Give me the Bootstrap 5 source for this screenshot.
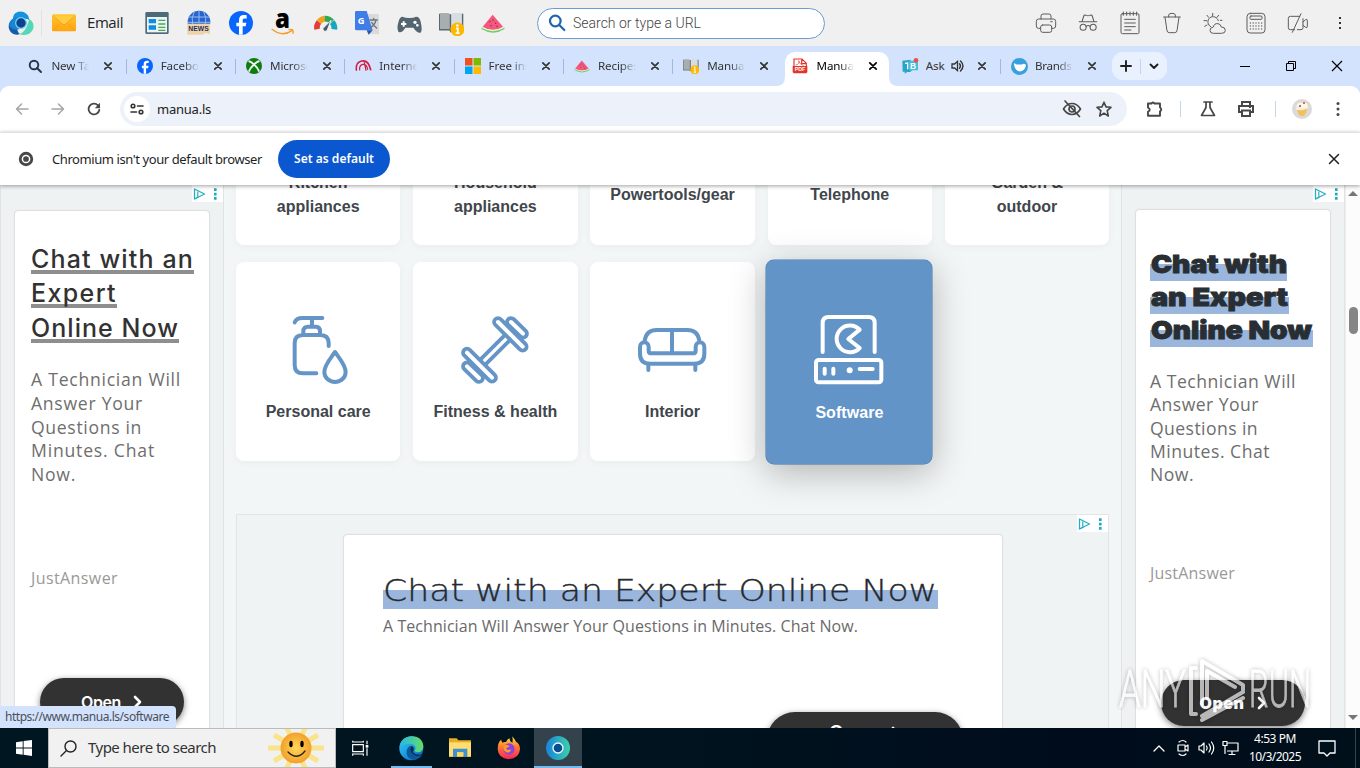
<!DOCTYPE html>
<html lang="en">
<head>
<meta charset="utf-8">
<meta name="viewport" content="width=device-width, initial-scale=1">
<title>manua.ls</title>
<link href="https://cdn.jsdelivr.net/npm/bootstrap@5.3.0/dist/css/bootstrap.min.css" rel="stylesheet">
<style>
body{font-family:"Noto Sans","Open Sans",sans-serif;font-size:12px;line-height:1.3;color:#1f1f1f;background:#f3f6f6}
svg{display:block;flex:none;overflow:visible}
[data-w]{display:inline-block;white-space:nowrap}
.quickbar,.tabstrip,.addrrow,.infobar,.taskbar{flex:none}
.ln{fill:none;stroke:currentColor;stroke-linecap:round;stroke-linejoin:round}
.quickbar{height:46px;background:#f0f0f0}
.quickbar .cell{width:42px;display:flex;justify-content:center;align-items:center;flex:none}
.quickbar .tool{color:#5c5c5c}
.urlbox{width:288px;height:31px;border:1px solid #6c9bd2;border-radius:16px;background:#fff;font:300 14px Roboto,sans-serif;color:#444;margin-left:23px}
.tabstrip{height:40px;background:#d3e3fd;padding-left:17.4px}
.tabcell{width:109.3px;height:40px;flex:none;padding-left:10px;position:relative;font-size:11.6px;color:#333}
.tabcell:not(.nosep)::after{content:"";position:absolute;right:0;top:13px;width:1px;height:15px;background:#9db9e4}
.tabcell .lbl{width:38px;margin-left:8px;overflow:hidden;white-space:nowrap;letter-spacing:-.1px;-webkit-mask:linear-gradient(90deg,#000 60%,transparent)}
.tabcell .shut{margin-left:11px}
.tabcell.front::before{content:"";position:absolute;left:3px;right:3px;top:6px;bottom:0;background:#fff;border-radius:10px 10px 0 0}
.tabcell.front>*{position:relative}
.foot{position:absolute!important;bottom:0;width:9px;height:9px}
.newtab{width:55px;height:28px;border-radius:11px;background:#e9f1fe;margin-left:2px}
.wctl{width:46px;display:flex;justify-content:center}
.addrrow{height:46px;background:#fff;border-radius:9px 9px 0 0;color:#474747}
.omni{width:1007px;height:34px;border-radius:17px;background:#ecf1fa;margin-left:8px;padding-left:4px}
.chip{width:26px;height:26px;border-radius:50%;background:#fff}
.c36{width:36px;display:flex;justify-content:center;flex:none}
.vbar{width:1px;height:16px;background:#c5d5ee}
.infobar{height:53px;background:#fff;border-top:1px solid #dfe1e5;box-shadow:0 1px 4px rgba(0,0,0,.38);z-index:5;position:relative;font-size:13px}
.infobar .btn{width:112px;height:38px;border-radius:19px;background:#0b57d0;color:#fff;font-size:12px;font-weight:600;padding:0}
.sidead{width:224px;background:#eff2f2;border:solid #dfe3e3;border-width:0 1px;flex:none;position:relative}
.adtag{position:absolute;right:0;top:0;height:17px;width:31px;background:#fff}
.adcard{background:#fff;box-shadow:0 0 2px rgba(0,0,0,.28);border-radius:3px 3px 0 0}
.sidead .adcard{width:194px;height:560px;padding-left:16px;margin-left:14px}
.h-left{font:450 25px/34.4px Inter,sans-serif;color:#323232}
.h-left span{background:linear-gradient(#8e8e8e,#8e8e8e) 0 28px/100% 4px no-repeat;height:34.4px}
.h-right{font:900 25px/33px Inter,"Open Sans",sans-serif}
.h-right text{fill:#282e33;stroke:#282e33;stroke-width:.9}
.h-right svg{background:linear-gradient(#9ab6dc,#9ab6dc) 0 16px/100% 17px no-repeat}
.h-mid{font:200 29.5px/38px "DejaVu Sans Light","DejaVu Sans",sans-serif}
.h-mid text{fill:#252a30;stroke:#252a30;stroke-width:.35}
.h-mid svg{background:linear-gradient(#9ab6dc,#9ab6dc) 0 19px/100% 19px no-repeat}
.adcopy{font:400 17.6px/23.7px "Open Sans",sans-serif;color:#6e6e6e}
.brand{font:400 16px/22px "Open Sans",sans-serif;color:#999}
.open{width:144px;height:48px;border-radius:24px;background:#323232;color:#fff;box-shadow:0 2px 6px rgba(0,0,0,.5);font:600 16px Inter,sans-serif;gap:12px}
.centre{width:897px;padding:0 12px;flex:none}
.tiles{display:grid;grid-template-columns:repeat(5,164.4px);column-gap:12.8px}
.tile{background:#fff;border-radius:8px;box-shadow:0 2px 8px rgba(0,0,0,.04);text-align:center;font:700 16px/24px "Liberation Sans",sans-serif;color:#3f464c}
.tile.cut{height:60px;border-radius:0 0 8px 8px;display:flex;align-items:flex-end;justify-content:center;overflow:hidden;padding-bottom:26px}
.tile.cut.one{padding-bottom:38px}
.tile.full{height:199px;padding-top:53px;color:#3f464c}
.tile.full svg{margin:0 auto 15px;color:#6595c7}
.tile.hot{background:#6394c7;color:#fff;height:204px;width:166px;margin:-2px 0 0 -1.2px;padding-top:55px;box-shadow:0 8px 36px rgba(0,0,0,.28),0 0 0 .5px #4f83b8;position:relative}
.tile.hot svg{color:#fff;margin-bottom:16px}
.midad{height:240px;margin-top:50px;background:#f0f3f3;border:1px solid #e2e5e5;position:relative;width:873px}
.midad .adcard{width:658px;margin:0 0 0 107px;height:220px;padding:36px 0 0 39px}
.open.big{width:196px;height:56px;border-radius:28px;font-size:19px}
.scroller{width:15px;background:#fcfcfc;border-left:1px solid #eee;flex:none}
.status{position:absolute;left:0;bottom:0;width:176px;height:22px;background:#d3e3fd;border-radius:0 4px 0 0;padding:3px 0 0 5px;color:#4a5058;z-index:4}
.watermark{position:absolute;left:1112px;bottom:2px;z-index:4}
.taskbar{height:40px;background:linear-gradient(90deg,#001620,#00141f 45%,#000c1c 80%,#00101a);color:#fff}
.finder{width:288px;height:40px;background:#f1f1f1;border:1px solid #bbb;color:#333;font-size:15px}
.app{width:49px;height:40px;display:flex;align-items:center;justify-content:center;flex:none}
.app.run{box-shadow:inset 0 -2px #76b9ed}
</style>
</head>
<body class="vh-100 overflow-hidden d-flex flex-column">
<svg width="0" height="0" class="position-absolute">
<defs>
<linearGradient id="env" x2="0" y2="1"><stop stop-color="#ffc52e"/><stop offset="1" stop-color="#ffa412"/></linearGradient>
<linearGradient id="edge" x2="1" y2="1"><stop offset=".1" stop-color="#31c6ee"/><stop offset=".55" stop-color="#1695df"/><stop offset="1" stop-color="#0c4f9e"/></linearGradient>
<linearGradient id="edge2" x2="1"><stop stop-color="#25b8e8"/><stop offset="1" stop-color="#65dd65"/></linearGradient>
<linearGradient id="fire" x2="0" y2="1"><stop stop-color="#ffe642"/><stop offset=".45" stop-color="#ff7a2e"/><stop offset="1" stop-color="#f7245c"/></linearGradient>
<linearGradient id="ring" x2="1"><stop stop-color="#1684da"/><stop offset="1" stop-color="#3dd0ac"/></linearGradient>
<radialGradient id="sun"><stop stop-color="#ffd65c"/><stop offset="1" stop-color="#f2a129"/></radialGradient>
<symbol id="x" viewBox="0 0 16 16"><path class="ln" stroke-width="1.7" d="M4.800 4.800l6.400 6.400M11.200 4.800l-6.400 6.400"/></symbol>
<symbol id="melon" viewBox="0 0 72 72"><path d="M35 11L66 47Q36 68 5 47z" fill="#f7577c"/><path d="M3 49Q36 67 69 49L71 54Q37 76 1 54z" fill="#75ca70"/><path d="M4 48Q36 65 68 48L69 51Q36 70 3 51z" fill="#e5f7cf"/><path d="M27 30v4M36 25v4M44 35v4M30 42v4M48 44v4" stroke="#59354b" stroke-width="3"/></symbol>
<symbol id="book" viewBox="0 0 72 72"><path d="M3 6h18q9 0 12 4V52H3z" fill="#a8adb0"/><path d="M33 10q5-4 12-4h22v46H33z" fill="#d7dde0"/><path d="M1 8v46h30l3 5 3-5h31V8M33 9v45" fill="none" stroke="#596870" stroke-width="4"/><circle cx="53" cy="53" r="20" fill="#ffb800"/><path d="M49 50h5v14m-6 0h11" stroke="#fff" stroke-width="5" fill="none"/><circle cx="53" cy="42" r="3.6" fill="#fff"/></symbol>
<symbol id="fb" viewBox="0 0 72 72"><circle cx="36" cy="36" r="36" fill="#0866ff"/><path d="M30 71V46h-8V35h8v-7c0-13 7-18 23-15v10c-9-1-12 0-12 6v6h11l-2 11h-9v25z" fill="#fff"/></symbol>
<symbol id="adc" viewBox="0 0 31 17"><path d="M2.500 4v10l10-5z" fill="#fff" stroke="#26afc3" stroke-width="1.300" stroke-linejoin="round"/><path d="M5.800 6.500v6M2.500 14l4-2" stroke="#26afc3" stroke-width="1.200"/><path d="M22 3.200h2.600v2.700H22zm0 4.500h2.600v2.700H22zm0 4.300h2.600v2.700H22z" fill="#1cabc1"/></symbol>
<symbol id="chev" viewBox="0 0 10 14"><path class="ln" stroke-width="2.6" d="M2 2l5 5-5 5"/></symbol>
</defs></svg>

<!-- quick launch bar -->
<div class="quickbar d-flex align-items-center">
<div class="cell border-end"><svg width="26" height="26" viewBox="0 0 78 78"><path d="M15 30C12-5 62-3 64 30Q50 22 30 32z" fill="#1593df"/><path d="M14 27C-12 46 9 83 36 72Q27 68 26 42z" fill="#165ba8"/><path d="M64 27C92 46 70 86 34 72Q48 70 58 45z" fill="#54d7b6"/><path d="M14 27Q20 20 29 23 18 43 35 57 18 64 4 49 3 34 14 27z" fill="#1985d2"/><circle cx="39" cy="39" r="16" fill="#0c438e" stroke="#6cd1f3" stroke-width="4"/></svg></div>
<div style="margin-left:10px"><svg width="24" height="20" viewBox="0 0 72 60"><rect y="4" width="72" height="51" rx="5" fill="url(#env)"/><path d="M3 8l28 25q5 5 10 0L69 8" fill="#ffcd3b" stroke="#e79a17" stroke-width="2"/><path d="M2 53l24-23M70 53L46 30" stroke="#ed9c16" stroke-width="2"/></svg></div>
<div style="margin:-3px 0 0 11px;font:400 15px 'Open Sans'" class="text-dark"><span data-w="36">Email</span></div>
<div style="width:13px"></div>
<div class="cell"><svg width="24" height="24" viewBox="0 0 72 72"><rect x="1" y="3" width="70" height="66" rx="4" fill="#506979"/><path d="M6 18h60v46H6z" fill="#e9f5f4"/><path d="M11 24h22v13H11zm0 19h22v13H11z" fill="#128cde"/><path d="M40 28h21M40 39h21M40 49h21M40 58h21" stroke="#4ca64e" stroke-width="4"/></svg></div>
<div class="cell"><svg width="26" height="26" viewBox="0 0 78 78"><circle cx="39" cy="36" r="34" fill="#2864cf"/><path class="ln" color="#94baf1" stroke-width="3" d="M39 3v36M8 21h62M6 37h66M25 5Q14 24 20 42M53 5Q64 24 58 42"/><path d="M4 41h68v31l-14-3-8 5H4z" fill="#f0d2a9"/><text x="7" y="64" font-family="Liberation Sans" font-weight="700" font-size="19" textLength="61" lengthAdjust="spacingAndGlyphs" fill="#25345a">NEWS</text></svg></div>
<div class="cell"><svg width="24" height="24"><use href="#fb"/></svg></div>
<div class="cell"><svg width="26" height="26" viewBox="0 0 78 78"><text x="15" y="54" font-family="Open Sans" font-weight="800" font-size="79" textLength="45" lengthAdjust="spacingAndGlyphs" fill="#000">a</text><path d="M6 58Q37 82 66 62m-9-3q16-3 12 11" class="ln" color="#f79c24" stroke-width="4"/></svg></div>
<div class="cell"><svg width="25" height="25" viewBox="0 0 75 75"><g fill="none" stroke-width="17"><path d="M12 55A26 26 0 0 1 18 33" stroke="#e23c3a"/><path d="M18 33A26 26 0 0 1 35 23" stroke="#f3a11f"/><path d="M35 23A26 26 0 0 1 56 32" stroke="#31a852"/><path d="M57 33A26 26 0 0 1 64 55" stroke="#16a6bd"/></g><path d="M54 28L43 57a7 7 0 0 1-13-5z" fill="#465b69" stroke="#f0f0f0" stroke-width="3"/></svg></div>
<div class="cell"><svg width="26" height="26" viewBox="0 0 78 78"><path d="M30 12h42q3 0 3 4v57H42z" fill="#dadada"/><path d="M5 3h33l18 58H8q-5 0-5-5V6z" fill="#3f7de8"/><path d="M38 61h18L44 74z" fill="#2856b7"/><text x="11" y="41" fill="#fff" font-family="Open Sans" font-weight="700" font-size="28">G</text><path class="ln" color="#68777e" stroke-width="4" d="M48 30h22M59 25v5m7 0Q62 46 50 52m3-15q7 11 15 17"/></svg></div>
<div class="cell"><svg width="25" height="25" viewBox="0 0 75 75"><path d="M17 17q6 4 20 4t20-4q10-1 14 15 6 27 0 33-10 3-22-15H25Q14 68 4 62-2 51 6 28q3-11 11-11z" fill="#526570"/><path d="M20 31v16M12 39h16" stroke="#fff" stroke-width="6"/><circle cx="54" cy="34" r="5" fill="#fff"/><circle cx="61" cy="43" r="4" fill="#fff"/></svg></div>
<div class="cell"><svg width="25" height="25"><use href="#book"/></svg></div>
<div class="cell"><svg width="24" height="24"><use href="#melon"/></svg></div>
<div class="urlbox d-flex align-items-center"><svg width="18" height="18" viewBox="0 0 18 18" style="margin:0 7px 0 10px"><g class="ln" color="#1f66ae" stroke-width="2.2"><circle cx="7.3" cy="7" r="5.3"/><path d="M11.3 11l5 5"/></g></svg><span data-w="128">Search or type a URL</span></div>
<div class="d-flex ms-auto tool">
<div class="cell"><svg width="22" height="22" viewBox="0 0 66 66"><g class="ln" stroke-width="3"><path d="M18 21V12q0-6 6-6h18q6 0 6 6v9M16 49H10Q4 49 4 42V28q0-7 7-7h44q7 0 7 7v14q0 7-7 7h-5"/><rect x="17" y="39" width="33" height="22" rx="6"/><path d="M47 29h5"/></g></svg></div>
<div class="cell"><svg width="20" height="20" viewBox="0 0 66 66"><g class="ln" stroke-width="3.500"><path d="M13 29l6-19q1-4 6-3 8 4 16 0 5-1 6 3l6 19zM4 29h58"/><circle cx="17" cy="47" r="10"/><circle cx="50" cy="47" r="10"/><path d="M27 44q6-5 13 0"/></g></svg></div>
<div class="cell"><svg width="22" height="24" viewBox="0 0 66 72"><g class="ln" stroke-width="3"><rect x="6" y="8" width="54" height="60" rx="4"/><path d="M13 3v10M23 3v10M33 3v10M43 3v10M53 3v10M17 25h32M17 36h32M17 47h32M17 57h19"/></g></svg></div>
<div class="cell"><svg width="22" height="22" viewBox="0 0 66 66"><g class="ln" stroke-width="3"><path d="M8 15h50M23 15V9q0-5 10-5t10 5v6M12 16l6 40q1 6 7 6h16q6 0 7-6l6-40"/></g></svg></div>
<div class="cell"><svg width="23" height="23" viewBox="0 0 69 69"><g class="ln" stroke-width="3"><path d="M23 44A16 16 0 1 1 46 26M29 4v8M12 10l5 6M3 26h8M5 43l7-4M47 10l-5 6M57 25h-5"/><path d="M30 64q-9 0-9-9t10-10q3-12 14-10 8 1 10 10 12 0 12 10 0 9-10 9z" fill="#f0f0f0"/></g></svg></div>
<div class="cell"><svg width="22" height="22" viewBox="0 0 66 66"><g class="ln" stroke-width="3"><rect x="6" y="4" width="54" height="59" rx="10"/><rect x="15" y="12" width="36" height="10" rx="3"/><path stroke-width="4" stroke-dasharray="0 8.5" d="M16 33h36M16 42h36M16 51h36"/></g></svg></div>
<div class="cell"><svg width="22" height="22" viewBox="0 0 66 66"><g class="ln" stroke-width="3"><path d="M23 53H10q-6 0-6-6V19q0-6 6-6h28M31 53h11q6 0 6-6V20M48 30l8-7q5-3 5 3v17q0 6-5 3l-8-6M42 5L16 61"/></g></svg></div>
<div class="cell" style="width:41px"><svg width="4" height="16" viewBox="0 0 4 16"><path d="M1 2h2v2H1zm0 5h2v2H1zm0 5h2v2H1z" fill="#333"/></svg></div>
</div>
</div>

<!-- tab strip -->
<div class="tabstrip d-flex align-items-center">
<div class="tabcell d-flex align-items-center"><svg width="16" height="16" viewBox="0 0 16 16"><g class="ln" color="#283443" stroke-width="1.9"><circle cx="7" cy="7" r="4.3"/><path d="M10 10l4 4"/></g></svg><div class="lbl">New Tab</div><svg class="shut" width="16" height="16"><use href="#x"/></svg></div>
<div class="tabcell d-flex align-items-center"><svg width="16" height="16"><use href="#fb"/></svg><div class="lbl">Facebook</div><svg class="shut" width="16" height="16"><use href="#x"/></svg></div>
<div class="tabcell d-flex align-items-center"><svg width="16" height="16" viewBox="0 0 16 16"><circle cx="8" cy="8" r="8" fill="#107c10"/><path d="M2.500 3Q5 3.500 8 6.500 11 3.500 13.500 3M8 6.500Q4 10 2.800 13.600M8 6.500Q12 10 13.200 13.600" fill="none" stroke="#edf6f2" stroke-width="1.900"/></svg><div class="lbl">Microsoft</div><svg class="shut" width="16" height="16"><use href="#x"/></svg></div>
<div class="tabcell d-flex align-items-center"><svg width="17" height="16" viewBox="0 0 51 48"><g class="ln" color="#d31a40" stroke-width="5"><path d="M4 36Q1 13 20 9 40 5 47 35"/><path stroke-width="3.500" d="M14 36Q12 22 23 19q12-1 15 15M28 14l5 23"/></g></svg><div class="lbl" style="margin-left:7px">Internet</div><svg class="shut" width="16" height="16"><use href="#x"/></svg></div>
<div class="tabcell d-flex align-items-center"><svg width="16" height="16" viewBox="0 0 16 16"><path d="M0 0h7.500v7.500H0z" fill="#f25022"/><path d="M8.500 0H16v7.500H8.500z" fill="#7fba00"/><path d="M0 8.500h7.500V16H0z" fill="#00a4ef"/><path d="M8.500 8.500H16V16H8.500z" fill="#ffb900"/></svg><div class="lbl">Free ins</div><svg class="shut" width="16" height="16"><use href="#x"/></svg></div>
<div class="tabcell d-flex align-items-center"><svg width="16" height="16"><use href="#melon"/></svg><div class="lbl">Recipes</div><svg class="shut" width="16" height="16"><use href="#x"/></svg></div>
<div class="tabcell nosep d-flex align-items-center"><svg width="16" height="16"><use href="#book"/></svg><div class="lbl">Manuals</div><svg class="shut" width="16" height="16"><use href="#x"/></svg></div>
<div class="tabcell nosep front d-flex align-items-center text-black"><svg class="foot" style="left:-6px" viewBox="0 0 9 9"><path d="M9 0v9H0Q9 9 9 0z" fill="#fff"/></svg><svg class="foot" style="right:-6px" viewBox="0 0 9 9"><path d="M0 0v9h9Q0 9 0 0z" fill="#fff"/></svg><svg width="16" height="16" viewBox="0 0 48 48"><path d="M6 24V3h24l13 13v8M29 3v14h14" fill="#fff" stroke="#e5352b" stroke-width="3.500"/><path d="M11 21q13-3 9-13 1 10 15 15" fill="none" stroke="#e5352b" stroke-width="2"/><path d="M2 24h44v18l-3 4H5l-3-4z" fill="#e5352b"/><text x="8" y="40" font-family="Liberation Sans" font-weight="700" font-size="16" fill="#fff">PDF</text></svg><div class="lbl">Manuals</div><svg class="shut" width="16" height="16"><use href="#x"/></svg></div>
<div class="tabcell d-flex align-items-center"><svg width="17" height="16" viewBox="0 0 51 48"><path d="M1 8l25-3v37H16l-8 5v-6H2z" fill="#28a5c7"/><path d="M21 8h27v29H32l-7 5v-6h-4z" fill="#48bdd9"/><text x="24" y="32" fill="#fff" font-family="Liberation Sans" font-weight="700" font-size="25">B</text><path d="M9 16l8-1v19" fill="none" stroke="#fff" stroke-width="4"/><circle cx="42" cy="7" r="7" fill="#ee4f52"/></svg><div class="lbl" style="width:19px;margin-left:7px;-webkit-mask:none">Ask</div><svg width="14" height="14" viewBox="0 0 14 14" style="margin-left:6px"><path d="M1 5h2.500l3-2.500v9l-3-2.500H1z" fill="none" stroke="#333" stroke-width="1.300"/><path d="M8.500 4.800q2 2.200 0 4.400M9.500 2q5 5 0 10" class="ln" stroke-width="1.400"/></svg><svg style="margin-left:9px" width="16" height="16"><use href="#x"/></svg></div>
<div class="tabcell nosep d-flex align-items-center"><svg width="17" height="17" viewBox="0 0 17 17"><circle cx="8.500" cy="8.500" r="8.500" fill="#38a0dd"/><path d="M3 5l2.500 1.500h5.500Q13 5 15 7q-1 6-6.500 6.500Q3 12 3 5z" fill="#fff"/></svg><div class="lbl" style="margin-left:7px;letter-spacing:-.3px">Brands</div><svg class="shut" width="16" height="16"><use href="#x"/></svg></div>
<div class="newtab d-flex align-items-center"><svg width="55" height="28" viewBox="0 0 55 28"><g class="ln" stroke-width="1.900" stroke-linecap="butt"><path d="M9 14h10M14 9v10"/><path d="M38.500 12.500L42 16l3.500-3.500"/></g><path d="M28.500 7v15" stroke="#c2d4f4"/></svg></div>
<div class="d-flex ms-auto text-black"><div class="wctl"><svg width="12" height="12"><path d="M1 6.500h10" stroke="#000"/></svg></div><div class="wctl"><svg width="12" height="12"><path d="M1.500 3.500h7v7h-7zM3.500 3.500v-2h7v7h-2" fill="none" stroke="#000"/></svg></div><div class="wctl"><svg width="12" height="12"><path d="M1 1l10 10M11 1L1 11" stroke="#000" stroke-width="1.200"/></svg></div></div>
</div>

<!-- address row -->
<div class="flex-shrink-0" style="background:#d3e3fd"><div class="addrrow d-flex align-items-center">
<div style="width:4px"></div>
<div class="c36"><svg width="14" height="14" viewBox="0 0 14 14"><path class="ln" color="#a5a5a5" stroke-width="1.500" d="M13 7H1.500M6.500 2l-5 5 5 5"/></svg></div>
<div class="c36"><svg width="14" height="14" viewBox="0 0 14 14"><path class="ln" color="#a5a5a5" stroke-width="1.500" d="M1 7h11.500M7.500 2l5 5-5 5"/></svg></div>
<div class="c36"><svg width="14" height="14" viewBox="0 0 14 14"><path class="ln" stroke-width="1.800" d="M12.300 8A5.400 5.400 0 1 1 11 3.400L12.300 5"/><path d="M13 .8v5.400H7.800z" fill="currentColor"/></svg></div>
<div class="omni d-flex align-items-center"><div class="chip d-flex align-items-center justify-content-center"><svg width="14" height="14" viewBox="0 0 14 14"><g class="ln" color="#333" stroke-width="1.600"><circle cx="3" cy="4" r="1.800"/><path d="M7.500 4H13M1 10h5.500"/><circle cx="11" cy="10" r="1.800"/></g></svg></div>
<div style="font-size:13px;margin-left:7px;color:#222"><span data-w="54">manua.ls</span></div>
<svg class="ms-auto" width="20" height="18" viewBox="0 0 20 18"><g class="ln" stroke-width="1.700"><path d="M1.500 9Q5 3.500 10 3.500T18.500 9Q15 14.500 10 14.500T1.500 9z"/><circle cx="10" cy="9" r="3"/><path d="M3 1l14.500 15.500"/></g></svg>
<svg style="margin:0 15px 0 14px" width="16" height="16" viewBox="0 0 16 16"><path class="ln" stroke-width="1.600" d="M8 1.200l2 4.700 5 .4-3.800 3.400L12.300 15 8 12.200 3.700 15l1.100-5.300L1 6.300l5-.4z"/></svg></div>
<svg style="margin-left:19px" width="17" height="17" viewBox="0 0 17 17"><path class="ln" stroke-width="1.900" d="M2 2.500h3.500q1-2 3 0H14v4q2.500 1.500 0 4v4.300H2v-4Q5.500 9 2 6.500z"/></svg>
<div class="vbar" style="margin:0 18px 0 17px"></div>
<svg width="18" height="18" viewBox="0 0 18 18"><path class="ln" stroke-width="1.700" d="M5 2h8M7 2v5.500L2.500 15.500h13L11 7.500V2"/></svg>
<svg style="margin-left:20px" width="18" height="18" viewBox="0 0 18 18"><g fill="none" stroke="#474747" stroke-width="2"><path d="M5 5V2h8v3M4 12H2V6h14v6h-2"/><path d="M5 10.500h8V16H5z"/></g><path d="M12 7.500h2" stroke="#474747"/></svg>
<div class="vbar" style="margin:0 16px 0 20px"></div>
<svg width="20" height="20" viewBox="0 0 20 20"><circle cx="10" cy="10" r="10" fill="#ddd9da"/><path d="M4 7q3-5 6-3 5-2 6 4-6 3-12-1z" fill="#fff8e9"/><path d="M5 9h10l-1 5-2 3H8l-2-3z" fill="#efc25b"/><path d="M4 9q6 3 12-1" stroke="#ffefdb" stroke-width="2" fill="none"/><circle cx="8" cy="7" r="1" fill="#80504a"/><circle cx="12" cy="4" r="1" fill="#d2422b"/></svg>
<svg style="margin-left:24px" width="4" height="16" viewBox="0 0 4 16" fill="#474747"><circle cx="2" cy="2.500" r="1.500"/><circle cx="2" cy="8" r="1.500"/><circle cx="2" cy="13.500" r="1.500"/></svg>
</div></div>

<!-- default browser prompt -->
<div class="infobar d-flex align-items-center"><svg style="margin:0 18px 0 18px" width="16" height="16" viewBox="0 0 16 16"><circle cx="8" cy="8" r="7.200" fill="#484848"/><circle cx="8" cy="8" r="3.600" fill="#484848" stroke="#fff" stroke-width="1.500"/></svg><span data-w="210">Chromium isn't your default browser</span>
<button class="btn" style="margin-left:16px"><span data-w="80">Set as default</span></button>
<svg class="ms-auto" style="margin-right:17px" width="18" height="18" viewBox="0 0 16 16"><path class="ln" stroke-width="1.300" d="M4 4l8 8M12 4l-8 8"/></svg></div>

<!-- page -->
<main class="flex-fill d-flex position-relative overflow-hidden" style="min-height:0">
<aside class="sidead"><svg class="adtag" viewBox="0 0 31 17"><use href="#adc"/></svg>
<div class="adcard" style="margin-top:26px;padding-top:31px">
<div class="h-left"><span data-w="163">Chat with an</span><br><span data-w="86">Expert</span><br><span data-w="148">Online Now</span></div>
<div class="adcopy" style="margin-top:23px"><span data-w="150">A Technician Will</span><br><span data-w="112">Answer Your</span><br><span data-w="111">Questions in</span><br><span data-w="124">Minutes. Chat</span><br><span data-w="45">Now.</span></div>
<div class="brand" style="margin-top:80px"><span data-w="87">JustAnswer</span></div>
<div class="open d-flex align-items-center justify-content-center" style="margin:89px 0 0 9px"><span data-w="40">Open</span><svg width="10" height="14"><use href="#chev"/></svg></div>
</div></aside>

<section class="centre">
<div class="tiles">
<div class="tile cut">Kitchen<br>appliances</div><div class="tile cut">Household<br>appliances</div><div class="tile cut one">Powertools/gear</div><div class="tile cut one">Telephone</div><div class="tile cut">Garden &amp;<br>outdoor</div>
</div>
<div class="tiles" style="margin-top:17px">
<div class="tile full"><svg width="70" height="70" viewBox="159 75 210 210"><g class="ln" stroke-width="12"><path d="M194 97q6-13 22-13h61M246 84v26M220 134v-10q0-14 14-14h24q12 0 12 14v10M296 168v-8q0-25-25-25h-52q-25 0-25 25v65q0 25 25 25h40M315 186c-14 20-32 40-32 60a32 30 0 0 0 64 0c0-20-18-40-32-60z"/></g></svg><span data-w="105">Personal care</span></div>
<div class="tile full"><svg width="70" height="70" viewBox="690 75 210 210"><g class="ln"><path stroke-width="35" d="M843 96l36 35M711 229l36 35"/><path stroke="#fff" stroke-width="12" d="M843 96l36 35M711 229l36 35"/><path stroke-width="33" d="M760 215l73-73"/><path stroke="#fff" stroke-width="10" d="M760 215l73-73"/><path stroke-width="35" d="M804 96l74 74M711 188l75 75"/><path stroke="#fff" stroke-width="12" d="M804 96l74 74M711 188l75 75"/></g></svg><span data-w="124">Fitness &amp; health</span></div>
<div class="tile full"><svg width="70" height="70" viewBox="174 225 210 210"><g class="ln" stroke-width="12"><path d="M194 302q5-32 36-32h92q31 0 36 32M276 270v70M180 340v-20a13 13 0 0 1 26 0v12q0 8 8 8h125q8 0 8-8v-12a13 13 0 0 1 26 0v21q0 30-30 30H210q-30 0-30-30zM205 373v17M346 373v17"/></g></svg><span data-w="55">Interior</span></div>
<div class="tile full hot"><svg width="70" height="70" viewBox="703 225 210 210"><g class="ln" stroke-width="12"><path d="M729 336v-87q0-18 18-18h120q18 0 18 18v87"/><rect x="709" y="360" width="196" height="67" rx="8"/><path d="M840 269a40 40 0 1 0 0 55l-34-27z"/><path d="M735 386v15M761 386v15M840 387h39"/></g><circle cx="810" cy="391" r="9" fill="#fff"/></svg><span data-w="68">Software</span></div>
</div>
<div class="midad"><svg class="adtag" viewBox="0 0 31 17"><use href="#adc"/></svg>
<div style="height:20px"></div>
<div class="adcard"><div class="h-mid"><svg width="555" height="38"><text x="0" y="30" textLength="554" lengthAdjust="spacingAndGlyphs">Chat with an Expert Online Now</text></svg></div>
<div style="font:400 16px/22px 'Open Sans';color:#6a6a6a;margin-top:6px"><span data-w="475">A Technician Will Answer Your Questions in Minutes. Chat Now.</span></div>
<div class="d-flex justify-content-between" style="margin-top:75px;padding-right:39px"><div class="brand" style="padding-top:12px;color:#777">JustAnswer</div><div class="open big d-flex align-items-start justify-content-center" style="padding-top:9px;gap:14px"><span data-w="48">Open</span><svg width="10" height="14" style="margin-top:5px"><use href="#chev"/></svg></div></div>
</div></div>
</section>

<aside class="sidead"><svg class="adtag" viewBox="0 0 31 17"><use href="#adc"/></svg>
<div class="adcard" style="margin-top:25px;padding-top:38px;padding-left:14px">
<div class="h-right"><svg width="137" height="33"><text x="1" y="25" textLength="136" lengthAdjust="spacingAndGlyphs">Chat with</text></svg><svg width="139" height="33"><text x="1" y="25" textLength="137" lengthAdjust="spacingAndGlyphs">an Expert</text></svg><svg width="163" height="33"><text x="1" y="25" textLength="161" lengthAdjust="spacingAndGlyphs">Online Now</text></svg></div>
<div class="adcopy" style="margin-top:23px;line-height:23.300px"><span data-w="146">A Technician Will</span><br><span data-w="109">Answer Your</span><br><span data-w="108">Questions in</span><br><span data-w="120">Minutes. Chat</span><br><span data-w="44">Now.</span></div>
<div class="brand" style="margin-top:76px"><span data-w="85">JustAnswer</span></div>
<div class="open d-flex align-items-center justify-content-center" style="margin:96px 0 0 11px;height:46px;font-weight:900"><span data-w="45">Open</span><svg width="10" height="14"><use href="#chev"/></svg></div>
</div></aside>
<div class="scroller d-flex flex-column align-items-center"><svg width="10" height="6" style="margin-top:5px"><path d="M0 6l5-5 5 5z" fill="#777"/></svg><div style="margin-top:111px;width:9px;height:27px;border-radius:5px;background:#858585"></div><svg class="mt-auto mb-2" width="10" height="5"><path d="M0 0h10L5 5z" fill="#777"/></svg></div>

<svg class="watermark" width="204" height="70" viewBox="0 0 204 70" style="filter:drop-shadow(0 0 2px rgba(0,0,0,.4));opacity:.65"><g fill="#fff" stroke="#fff" stroke-width=".8" font-family="Roboto" font-weight="300" font-size="51"><text x="7" y="51" textLength="67" lengthAdjust="spacingAndGlyphs">ANY</text><text x="137" y="51" textLength="62" lengthAdjust="spacingAndGlyphs">RUN</text></g><g class="ln" color="#fff" stroke-width="4"><path d="M84 12h-5v46h5M90 48V5l41 24v5M95 42V15l28 16M90 60l41-24M90 64l41-22"/></g></svg>
<div class="status"><span data-w="164">https://www.manua.ls/software</span></div>
</main>

<!-- taskbar -->
<div class="taskbar d-flex align-items-center">
<div class="app" style="width:48px"><svg width="16" height="16" viewBox="0 0 16 16"><path d="M0 2.300l6.700-1v6.200H0zM7.600 1.100L16 0v7.500H7.600zM0 8.500h6.700v6.200L0 13.700zM7.600 8.500H16V16l-8.400-1.200z" fill="#fff"/></svg></div>
<div class="finder d-flex align-items-center"><svg style="margin:0 11px" width="17" height="17" viewBox="0 0 17 17"><g class="ln" color="#222" stroke-width="1.400"><circle cx="10.500" cy="6.500" r="5.500"/><path d="M6.500 10.500L1 16"/></g></svg><span data-w="128">Type here to search</span>
<svg class="ms-auto overflow-hidden" style="margin-right:10px" width="58" height="38" viewBox="-29 -19 58 38"><path d="M-28 0H28M-22-13L22 13M-22 13L22-13M-10-22L10 22M-10 22L10-22" stroke="#f9e48b" stroke-width="5"/><circle r="15.500" fill="url(#sun)"/><ellipse cx="-5" cy="-4" rx="1.700" ry="3.300"/><ellipse cx="6" cy="-4" rx="1.700" ry="3.300"/><path d="M-8 4Q1 13 9 3" class="ln" color="#222" stroke-width="1.300"/></svg></div>
<div class="app"><svg width="17" height="16" viewBox="0 0 51 48"><path d="M2 2v4h32V2M2 14h32v21H2zM2 47v-5h32v5M45 2v11M45 25v22" fill="none" stroke="#fff" stroke-width="3.500"/><path d="M41 15h8v8h-8z" fill="#fff"/></svg></div>
<div style="width:6px"></div>
<div class="app run" style="width:41px"><svg width="25" height="25" viewBox="0 0 75 75"><circle cx="37" cy="37" r="36" fill="url(#edge)"/><path d="M2 34C5-9 70-10 73 29c1 19-18 24-27 16 9-10 1-22-12-22C18 23 7 28 2 34z" fill="url(#edge2)"/><path d="M35 30q10 0 9 11-7 12 13 15 9 1 14-2-9 15-24 18-28-5-24-27 3-14 12-15z" fill="#0d579d"/><path d="M37 31q8 1 7 10-7 12 13 15 9 1 15-3-11 11-25 5-18-10-10-27z" fill="#062d4d"/></svg></div>
<div style="width:3px"></div>
<div class="app"><svg width="22" height="20" viewBox="0 0 66 60"><path d="M0 1h23l5 6h38v50H0z" fill="#e8ad25"/><path d="M0 13h66v42H0z" fill="#ffdd72"/><path d="M12 32h43v25H43V43H24v14H12z" fill="#3d91cf"/><path d="M24 43h19v9H24z" fill="#ffd65e"/></svg></div>
<div class="app"><svg width="24" height="24" viewBox="0 0 72 72"><path d="M46 1q8 10 11 16 12 7 12 23-2 28-34 30Q4 68 2 40 2 20 12 11l4 9q5-3 11-2 5-10 11-11-1 9 8 14 2-9 0-20z" fill="url(#fire)"/><circle cx="36" cy="39" r="17" fill="#8a43e1"/><path d="M20 29q11-7 18 3-9 1-11 6 5 6 16 2-2 10-12 10-15-4-11-21z" fill="#ff9b25"/></svg></div>
<div class="app run" style="width:48px;background:#34434b;margin-left:1px"><svg width="24" height="24" viewBox="0 0 72 72"><circle cx="36" cy="36" r="36" fill="url(#ring)"/><circle cx="36" cy="36" r="15" fill="#0b4d91" stroke="#eafaff" stroke-width="4"/></svg></div>
<div class="ms-auto d-flex align-items-center">
<svg width="12" height="8"><path class="ln" stroke-width="1.300" d="M1 7l5-5 5 5"/></svg>
<svg style="margin-left:12px" width="12" height="16" viewBox="0 0 12 16"><path class="ln" stroke-width="1.200" d="M1 5h7v6H1zM8 7l3-2v6L8 9M2 2q4-3 7 0M2 14q4 3 7 0"/></svg>
<svg style="margin-left:9px" width="17" height="14" viewBox="0 0 17 14"><path class="ln" stroke-width="1.200" d="M1 5h2l3-3v10L3 9H1zM8.500 5q1.500 2 0 4M11 3q3 4 0 8M13.500 1q4.500 6 0 12"/></svg>
<svg style="margin-left:7px" width="17" height="16" viewBox="0 0 17 16"><path class="ln" stroke-width="1.200" d="M6 3h10v8H5.500M10 11v3M7 14.500h6M1 1.500h4v4H1zM3 5.500v8"/></svg>
<div class="text-center" style="width:58px;margin-left:7px;line-height:18px"><span data-w="42">4:53 PM</span><br><span data-w="52">10/3/2025</span></div>
<svg style="margin:0 19px 0 14px" width="18" height="17" viewBox="0 0 18 17"><path class="ln" stroke-width="1.300" d="M1 1h16v12h-5l-3 3-3-3H1z"/></svg>
<div style="width:1px;height:40px;background:#39434e;margin-right:4px"></div>
</div></div>

<script>
document.querySelectorAll('[data-w]').forEach(function(el){
  var want = parseFloat(el.dataset.w), n = el.textContent.length;
  el.style.letterSpacing = (want - el.getBoundingClientRect().width) / n + 'px';
});
</script>
<script src="https://cdn.jsdelivr.net/npm/bootstrap@5.3.0/dist/js/bootstrap.bundle.min.js"></script>
</body>
</html>
